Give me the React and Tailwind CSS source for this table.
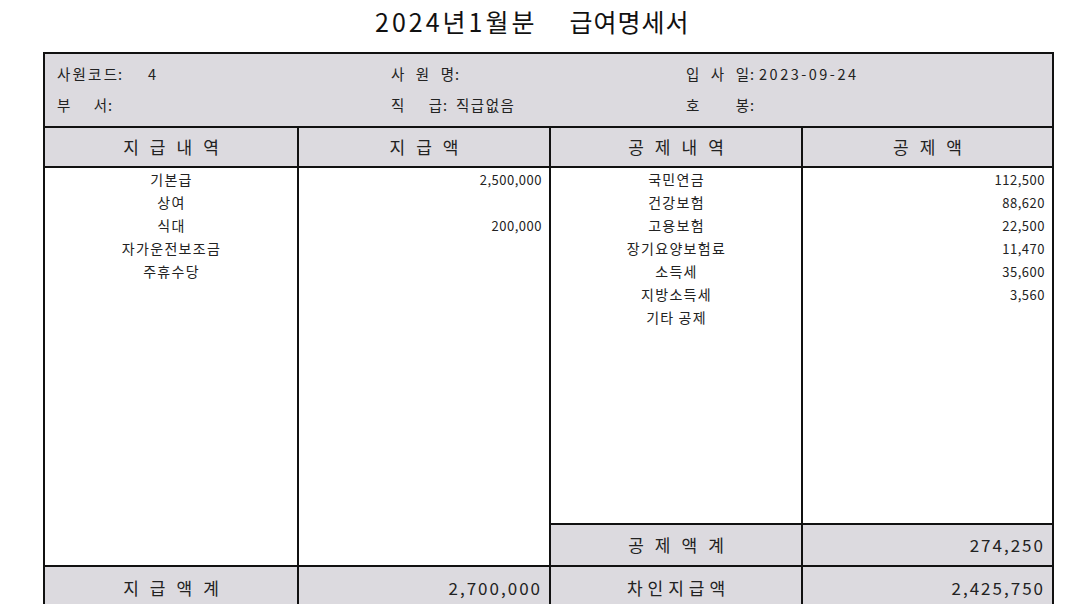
import React from 'react'

const PAY_ITEMS = [
  { name: '기본급', amount: '2,500,000' },
  { name: '상여', amount: '' },
  { name: '식대', amount: '200,000' },
  { name: '자가운전보조금', amount: '' },
  { name: '주휴수당', amount: '' },
]

const DEDUCT_ITEMS = [
  { name: '국민연금', amount: '112,500' },
  { name: '건강보험', amount: '88,620' },
  { name: '고용보험', amount: '22,500' },
  { name: '장기요양보험료', amount: '11,470' },
  { name: '소득세', amount: '35,600' },
  { name: '지방소득세', amount: '3,560' },
  { name: '기타공제', amount: '' },
]

// label with characters spread over a fixed width, then a colon
function Label({ chars, width }) {
  return (
    <span className="flex items-center">
      <span className="flex justify-between" style={{ width }}>
        {chars.map((c, i) => <span key={i}>{c}</span>)}
      </span>
      <span className="ml-[1px]">:</span>
    </span>
  )
}

function NameList({ items }) {
  return (
    <div className="flex flex-col">
      {items.map((it, i) => (
        <div key={i} className="h-[23px] flex items-center justify-center text-[14px] tracking-[1.3px] pl-[1px]">
          {it.name === '기타공제' ? <span>기타<span className="ml-[4px]">공제</span></span> : it.name}
        </div>
      ))}
    </div>
  )
}

function AmountList({ items }) {
  return (
    <div className="flex flex-col">
      {items.map((it, i) => (
        <div key={i} className="h-[23px] flex items-center justify-end pr-[7px] text-[13px] tracking-[0.5px]">{it.amount}</div>
      ))}
    </div>
  )
}

export default function App() {
  return (
    <div
      className="w-[1080px] h-[604px] overflow-hidden bg-white text-[#222]"
      style={{ fontFamily: '"Noto Sans CJK KR", "Noto Sans", sans-serif' }}
    >
      {/* Title */}
      <div className="h-[52px] flex items-center pl-[375px] pb-[8px] text-[25px] text-[#111]">
        <span className="tracking-[3px]">2024년1월분</span>
        <span className="ml-[32px] tracking-[1px]">급여명세서</span>
      </div>

      <div className="ml-[43px] w-[1011px] border-2 border-[#111]">
        {/* Employee info */}
        <div className="h-[74px] bg-[#dcdadf] border-b-2 border-[#111] pt-[4px] pl-[12px] text-[14.5px]">
          <div className="h-[31px] grid grid-cols-[334px_295px_1fr] items-center">
            <div className="flex items-center">
              <Label chars={['사', '원', '코', '드']} width={60} />
              <span className="ml-[26px]">4</span>
            </div>
            <div className="flex items-center">
              <Label chars={['사', '원', '명']} width={63} />
            </div>
            <div className="flex items-center">
              <Label chars={['입', '사', '일']} width={63} />
              <span className="ml-[5px] tracking-[2.5px]">2023-09-24</span>
            </div>
          </div>
          <div className="h-[31px] grid grid-cols-[334px_295px_1fr] items-center">
            <div className="flex items-center">
              <Label chars={['부', '서']} width={50} />
            </div>
            <div className="flex items-center">
              <Label chars={['직', '급']} width={51} />
              <span className="ml-[9px] tracking-[1.5px]">직급없음</span>
            </div>
            <div className="flex items-center">
              <Label chars={['호', '봉']} width={63} />
            </div>
          </div>
        </div>

        {/* Column headers */}
        <div className="h-[40px] grid grid-cols-[252px_252px_252px_1fr] bg-[#dcdadf] border-b-2 border-[#111] text-[17px]">
          <div className="flex items-center justify-center tracking-[11px] pl-[11px]">지급내역</div>
          <div className="flex items-center justify-center tracking-[11px] pl-[11px] border-l-2 border-[#111]">지급액</div>
          <div className="flex items-center justify-center tracking-[11px] pl-[11px] border-l-2 border-[#111]">공제내역</div>
          <div className="flex items-center justify-center tracking-[11px] pl-[11px] border-l-2 border-[#111]">공제액</div>
        </div>

        {/* Body */}
        <div className="grid grid-cols-[252px_252px_252px_1fr]">
          <div className="h-[397px]">
            <NameList items={PAY_ITEMS} />
          </div>
          <div className="h-[397px] border-l-2 border-[#111]">
            <AmountList items={PAY_ITEMS} />
          </div>
          <div className="flex flex-col border-l-2 border-[#111]">
            <div className="h-[355px]">
              <NameList items={DEDUCT_ITEMS} />
            </div>
            <div className="h-[42px] border-t-2 border-[#111] bg-[#dcdadf] flex items-center justify-center text-[17px] tracking-[11px] pl-[11px]">
              공제액계
            </div>
          </div>
          <div className="flex flex-col border-l-2 border-[#111]">
            <div className="h-[355px]">
              <AmountList items={DEDUCT_ITEMS} />
            </div>
            <div className="h-[42px] border-t-2 border-[#111] bg-[#dcdadf] flex items-center justify-end pr-[7px] text-[17px] tracking-[2px]">
              274,250
            </div>
          </div>
        </div>

        {/* Totals */}
        <div className="h-[44px] grid grid-cols-[252px_252px_252px_1fr] bg-[#dcdadf] border-t-2 border-[#111] text-[17px]">
          <div className="flex items-center justify-center tracking-[11px] pl-[11px]">지급액계</div>
          <div className="flex items-center justify-end pr-[7px] tracking-[2px] border-l-2 border-[#111]">2,700,000</div>
          <div className="flex items-center justify-center tracking-[5px] pl-[5px] border-l-2 border-[#111]">차인지급액</div>
          <div className="flex items-center justify-end pr-[7px] tracking-[2px] border-l-2 border-[#111]">2,425,750</div>
        </div>
      </div>
    </div>
  )
}
